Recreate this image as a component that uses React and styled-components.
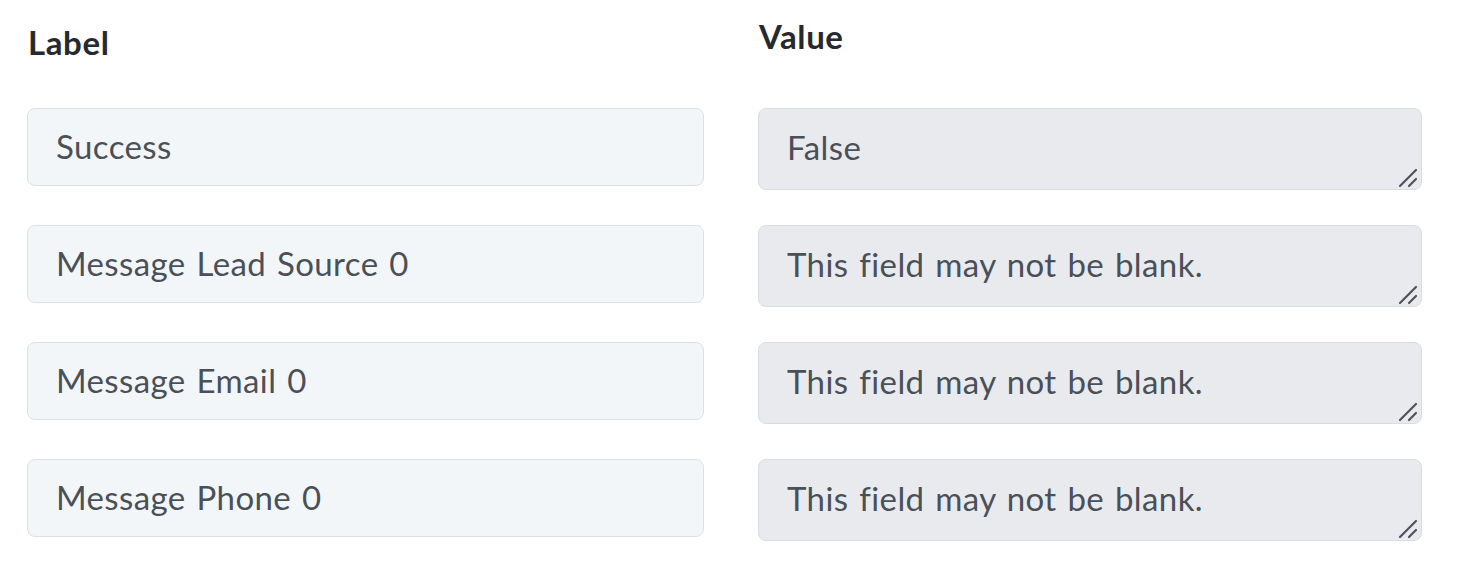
import React from 'react'
import styled, { createGlobalStyle } from 'styled-components'

const rows = [
  { label: `Success`, value: `False` },
  { label: `Message Lead Source 0`, value: `This field may not be blank.` },
  { label: `Message Email 0`, value: `This field may not be blank.` },
  { label: `Message Phone 0`, value: `This field may not be blank.` },
]

export default function App() {
  return (
    <Page>
      <GlobalStyle />
      <Column>
        <Heading>Label</Heading>
        {rows.map(({ label }) => (
          <LabelBox key={label}>{label}</LabelBox>
        ))}
      </Column>
      <Column $value>
        <Heading $value>Value</Heading>
        {rows.map(({ label, value }) => (
          <ValueBox key={label}>
            {value}
            <Grip width='22' height='22' viewBox='0 0 22 22'>
              <path d='M3 20 L19 4 M12 20 L19 13' />
            </Grip>
          </ValueBox>
        ))}
      </Column>
    </Page>
  )
}

const GlobalStyle = createGlobalStyle`
  body {
    margin: 0;
    background: #fff;
    font-family: Lato, 'Open Sans', sans-serif;
    font-variant-ligatures: none;
  }
`

const Page = styled.div`
  display: grid;
  grid-template-columns: 677px 664px;
  column-gap: 54px;
  padding: 0 0 0 27px;
`

const Column = styled.div`
  display: flex;
  flex-direction: column;
  gap: ${p => (p.$value ? `35px` : `39px`)};
`

const Heading = styled.div`
  font-size: 33px;
  font-weight: 700;
  letter-spacing: 0.6px;
  color: #26292e;
  line-height: 36px;
  margin: ${p => (p.$value ? `18px 0 19px` : `24px 0 9px`)};
  padding-left: 1px;
`

const fieldText = `
  font-size: 33px;
  letter-spacing: 0.4px;
  word-spacing: 2px;
  color: #4a5058;
`

const LabelBox = styled.div`
  box-sizing: border-box;
  height: 78px;
  display: flex;
  align-items: center;
  padding: 0 28px 3px;
  background: #f3f6f9;
  border: 1.5px solid #dde1e6;
  border-radius: 8px;
  ${fieldText}
`

const ValueBox = styled.div`
  position: relative;
  box-sizing: border-box;
  height: 82px;
  display: flex;
  align-items: center;
  padding: 0 28px 5px;
  background: #e9eaee;
  border: 1.5px solid #d9dce1;
  border-radius: 8px;
  ${fieldText}
`

const Grip = styled.svg`
  position: absolute;
  right: 2px;
  bottom: 1px;
  & path {
    stroke: #4f5359;
    stroke-width: 2.2;
    stroke-linecap: round;
    fill: none;
  }
`
